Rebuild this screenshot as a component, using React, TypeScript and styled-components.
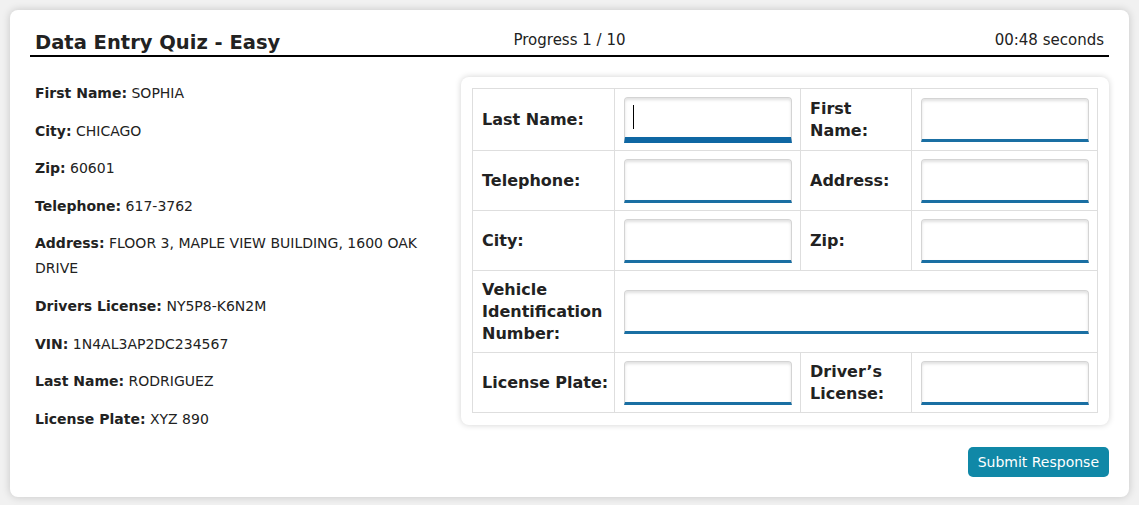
import React from 'react';
import styled, { createGlobalStyle } from 'styled-components';

const Global = createGlobalStyle`
  body {
    margin: 0;
    background: #f1f1f1;
    font-family: "DejaVu Sans", Inter, sans-serif;
    color: #222;
  }
`;

const Card = styled.section`
  margin: 10px;
  padding: 20px;
  background: #fff;
  border-radius: 8px;
  box-shadow: 0 0 8px rgba(0, 0, 0, 0.18);
`;

const Header = styled.header`
  display: grid;
  grid-template-columns: 1fr auto 1fr;
  align-items: end;
  border-bottom: 2px solid #000;
  padding: 0 5px;
  height: 25px;
`;

const Title = styled.h1`
  margin: 0;
  font-size: 19.5px;
  line-height: 24px;
  font-weight: 600;
  color: #222;
`;

const Meta = styled.div<{ $align: string }>`
  font-size: 15px;
  line-height: 20px;
  padding-bottom: 5px;
  color: #222;
  text-align: ${(p) => p.$align};
`;

const Body = styled.div`
  display: flex;
  align-items: flex-start;
  margin-top: 20px;
`;

const Facts = styled.div`
  width: 431px;
  padding: 4px 10px 0 5px;
  box-sizing: border-box;
`;

const Fact = styled.p`
  margin: 0 0 12.6px;
  font-size: 14px;
  line-height: 25px;
  color: #222;

  b {
    font-weight: 600;
  }

  &:last-child {
    margin-bottom: 0;
  }
`;

const Panel = styled.div`
  flex: 1;
  padding: 11px 11px 12px;
  border-radius: 8px;
  background: #fff;
  box-shadow: 0 0 6px rgba(0, 0, 0, 0.18);
`;

const Table = styled.table`
  width: 100%;
  border-collapse: collapse;
`;

const Label = styled.th<{ $w?: number }>`
  border: 1px solid #dedede;
  text-align: left;
  padding: 8px 4px 7px 9px;
  font-size: 16px;
  line-height: 22px;
  font-weight: 600;
  color: #222;
  width: ${(p) => (p.$w ? `${p.$w}px` : 'auto')};
  box-sizing: border-box;
`;

const Cell = styled.td`
  border: 1px solid #dedede;
  padding: 8px 8px 7px 9px;
`;

const Input = styled.input<{ $focus?: boolean }>`
  display: block;
  width: 100%;
  box-sizing: border-box;
  height: ${(p) => (p.$focus ? 46 : 44)}px;
  border: 1px solid #d4d4d4;
  border-bottom: ${(p) => (p.$focus ? 6 : 3)}px solid ${(p) => (p.$focus ? '#0f67a3' : '#1a6fa3')};
  border-radius: 4px 4px 0 0;
  box-shadow: inset 0 2px 3px rgba(0, 0, 0, 0.12);
  padding: 0 8px;
  font-size: 16px;
  outline: none;
  background: #fff;
`;

const Caret = styled.span`
  display: inline-block;
  width: 1px;
  height: 24px;
  background: #000;
`;

const FocusWrap = styled.div`
  position: relative;

  ${Caret} {
    position: absolute;
    left: 9px;
    top: 8px;
  }
`;

const Footer = styled.div`
  display: flex;
  justify-content: flex-end;
  margin-top: 15px;
`;

const Submit = styled.button`
  height: 30px;
  padding: 0 10px;
  border: none;
  border-radius: 5px;
  background: #1088a7;
  color: #fff;
  font-family: inherit;
  font-size: 14px;
  font-weight: 500;
  cursor: pointer;
`;

const facts: [string, string][] = [
  ['First Name:', 'SOPHIA'],
  ['City:', 'CHICAGO'],
  ['Zip:', '60601'],
  ['Telephone:', '617-3762'],
  ['Address:', 'FLOOR 3, MAPLE VIEW BUILDING, 1600 OAK DRIVE'],
  ['Drivers License:', 'NY5P8-K6N2M'],
  ['VIN:', '1N4AL3AP2DC234567'],
  ['Last Name:', 'RODRIGUEZ'],
  ['License Plate:', 'XYZ 890'],
];

export default function App() {
  return (
    <>
      <Global />
      <Card>
        <Header>
          <Title>Data Entry Quiz - Easy</Title>
          <Meta $align="center">Progress 1 / 10</Meta>
          <Meta $align="right">00:48 seconds</Meta>
        </Header>
        <Body>
          <Facts>
            {facts.map(([k, v]) => (
              <Fact key={k}>
                <b>{k}</b> {v}
              </Fact>
            ))}
          </Facts>
          <Panel>
            <Table>
              <tbody>
                <tr>
                  <Label $w={142}>Last Name:</Label>
                  <Cell>
                    <FocusWrap>
                      <Input $focus />
                      <Caret />
                    </FocusWrap>
                  </Cell>
                  <Label $w={111}>First Name:</Label>
                  <Cell>
                    <Input />
                  </Cell>
                </tr>
                <tr>
                  <Label>Telephone:</Label>
                  <Cell>
                    <Input />
                  </Cell>
                  <Label>Address:</Label>
                  <Cell>
                    <Input />
                  </Cell>
                </tr>
                <tr>
                  <Label>City:</Label>
                  <Cell>
                    <Input />
                  </Cell>
                  <Label>Zip:</Label>
                  <Cell>
                    <Input />
                  </Cell>
                </tr>
                <tr>
                  <Label>Vehicle Identification Number:</Label>
                  <Cell colSpan={3}>
                    <Input />
                  </Cell>
                </tr>
                <tr>
                  <Label>License Plate:</Label>
                  <Cell>
                    <Input />
                  </Cell>
                  <Label>Driver’s License:</Label>
                  <Cell>
                    <Input />
                  </Cell>
                </tr>
              </tbody>
            </Table>
          </Panel>
        </Body>
        <Footer>
          <Submit>Submit Response</Submit>
        </Footer>
      </Card>
    </>
  );
}
